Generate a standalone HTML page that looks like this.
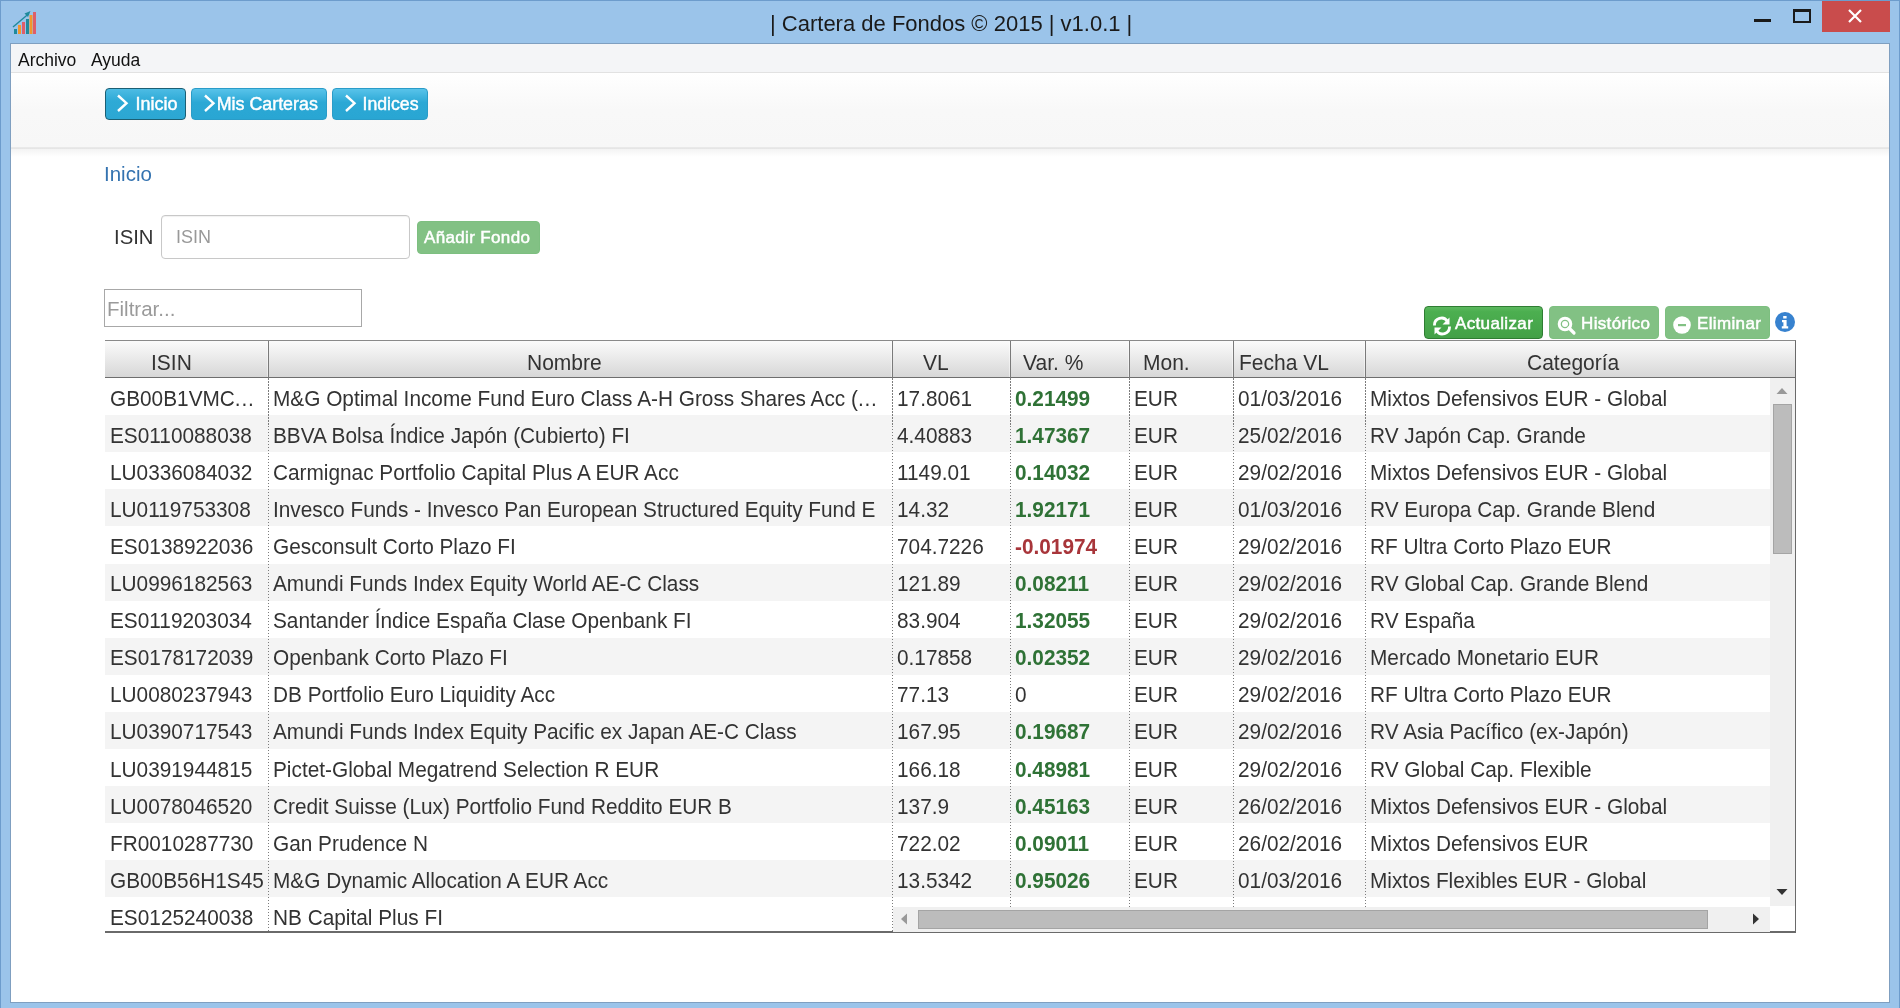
<!DOCTYPE html>
<html><head><meta charset="utf-8">
<style>
*{margin:0;padding:0;box-sizing:border-box}
html,body{width:1900px;height:1008px;overflow:hidden}
body{-webkit-font-smoothing:antialiased}
#wrap{position:absolute;left:0;top:0;width:1900px;height:1008px;will-change:transform}
body{position:relative;background:#9bc4ea;font-family:"Liberation Sans",sans-serif;color:#333}
.abs{position:absolute}
#frame{position:absolute;left:0;top:0;width:1900px;height:1008px;border:1px solid #6d9ccc;border-bottom:none}
#title{position:absolute;left:770px;top:11px;font-size:22px;color:#1a1a1a;white-space:nowrap;letter-spacing:0}
#client{position:absolute;left:10px;top:43px;width:1880px;height:960px;background:#fff;border:1px solid #7f9fc0}
#menu{position:absolute;left:0;top:0;width:1878px;height:29px;background:#f4f5f7;border-bottom:1px solid #e2e2e2}
#menu span{position:absolute;top:6px;font-size:17.5px;color:#111}
#toolbar{position:absolute;left:0;top:29px;width:1878px;height:75px;background:linear-gradient(#fff,#f8f8f8 50%,#f7f7f7)}
#tbline{position:absolute;left:0;top:103px;width:1878px;height:2px;background:linear-gradient(#ebebeb,#e4e4e4)}
#tbshadow{position:absolute;left:0;top:105px;width:1878px;height:8px;background:linear-gradient(#f3f3f3,#fff)}
.nav{position:absolute;top:88px;height:32px;border-radius:4px;color:#fff;font-size:18px;background:linear-gradient(#58c3ea,#2ba8d5 45%,#29a6d3);border:1px solid #2a9cc8}
.nav.sel{background:linear-gradient(#4dbce4,#2eaad6 40%,#2ca7d3);border:1.5px solid #1b5f74}
.nav span{position:absolute;top:5px;white-space:nowrap;-webkit-text-stroke:0.45px #fff}
.nav svg{position:absolute}
.gbtn{position:absolute;top:306px;height:33px;border-radius:4px;color:#fff;font-size:17px;letter-spacing:0.35px;background:#82c184;white-space:nowrap;border:1px solid #7dbf80}
.gbtn span{position:absolute;top:7px;-webkit-text-stroke:0.5px #fff}
.gbtn svg{position:absolute}
.cell{position:absolute;font-size:22px;white-space:nowrap;color:#333;transform:scaleX(0.9455);transform-origin:0 0}
.hdr{position:absolute;font-size:22px;white-space:nowrap;color:#333;top:349.8px;transform:scaleX(0.955);transform-origin:0 0}
.vsep{position:absolute;top:378px;width:1px;background:repeating-linear-gradient(#7c7c7c 0 1.5px,transparent 1.5px 3px)}
</style></head><body><div id="wrap">
<div id="frame"></div>
<!-- app icon -->
<svg class="abs" style="left:12px;top:9px" width="28" height="27" viewBox="0 0 28 27">
  <rect x="2" y="20" width="3" height="5" fill="#1f8a9c"/>
  <rect x="6" y="16" width="3" height="9" fill="#f2962c"/>
  <rect x="10" y="13" width="3" height="12" fill="#de5e6a"/>
  <rect x="14" y="10" width="3" height="15" fill="#1f8a9c"/>
  <rect x="17.5" y="6" width="3" height="19" fill="#f2962c"/>
  <rect x="21" y="3" width="3" height="22" fill="#de5e6a"/>
  <path d="M1 18 L17 4.5" stroke="#1f8a9c" stroke-width="1.4"/>
  <path d="M12.5 4.5 L18.5 2 L16 8 Z" fill="#1f8a9c"/>
</svg>
<div id="title">| Cartera de Fondos © 2015 | v1.0.1 |</div>
<!-- window controls -->
<div class="abs" style="left:1754px;top:19px;width:17px;height:3px;background:#1a1a1a"></div>
<div class="abs" style="left:1793px;top:9px;width:18px;height:14px;border:2px solid #1a1a1a;border-top-width:3px"></div>
<div class="abs" style="left:1822px;top:1px;width:68px;height:31px;background:#c94c4c"></div>
<svg class="abs" style="left:1846px;top:9px" width="18" height="14" viewBox="0 0 18 14"><path d="M3 1 L15 13 M15 1 L3 13" stroke="#fff" stroke-width="2.2"/></svg>

<div id="client">
  <div id="menu"><span style="left:7px">Archivo</span><span style="left:80px">Ayuda</span></div>
  <div id="toolbar"></div><div id="tbline"></div><div id="tbshadow"></div>
</div>

<div class="nav sel" style="left:104.5px;width:81px"><svg style="left:10.5px;top:4.5px" width="14" height="19"><path d="M2 1.5 L10.5 9.2 L2 17" fill="none" stroke="#fff" stroke-width="2.4"/></svg><span style="left:30px">Inicio</span></div>
<div class="nav" style="left:191px;width:136px"><svg style="left:10.6px;top:4.5px" width="14" height="19"><path d="M2 1.5 L10.5 9.2 L2 17" fill="none" stroke="#fff" stroke-width="2.4"/></svg><span style="left:24.7px;font-size:17.85px">Mis Carteras</span></div>
<div class="nav" style="left:331.5px;width:96px"><svg style="left:11.5px;top:4.5px" width="14" height="19"><path d="M2 1.5 L10.5 9.2 L2 17" fill="none" stroke="#fff" stroke-width="2.4"/></svg><span style="left:30px;font-size:17.7px">Indices</span></div>

<div class="abs" style="left:104px;top:162px;font-size:20.5px;color:#3473b0">Inicio</div>
<div class="abs" style="left:114px;top:225.5px;font-size:20.3px;color:#333">ISIN</div>
<div class="abs" style="left:161px;top:215px;width:249px;height:44px;border:1px solid #c8c8c8;border-radius:4px;box-shadow:inset 0 1px 1px rgba(0,0,0,0.06)"></div>
<div class="abs" style="left:176px;top:227px;font-size:18px;color:#999">ISIN</div>
<div class="gbtn" style="left:417px;top:221px;width:123px;height:33px"><span style="left:6px;top:6px">Añadir Fondo</span></div>

<div class="abs" style="left:104px;top:289px;width:258px;height:38px;border:1px solid #a8a8a8"></div>
<div class="abs" style="left:107px;top:297px;font-size:20.5px;color:#9a9a9a">Filtrar...</div>

<div class="gbtn" style="left:1424px;width:119px;background:linear-gradient(#5cb85f,#4caf50 15%,#43a047);border:1.5px solid #2f7d33">
  <svg style="left:7px;top:9px" width="20" height="20" viewBox="0 0 20 20"><g fill="none" stroke="#fff" stroke-width="2.8"><path d="M2.5 9.5 A7 7 0 0 1 15.5 5.5"/><path d="M17.5 10.5 A7 7 0 0 1 4.5 14.5"/></g><path d="M17.5 1.5 L17.5 8.5 L10.5 8.5 Z" fill="#fff"/><path d="M2.5 18.5 L2.5 11.5 L9.5 11.5 Z" fill="#fff"/></svg>
  <span style="left:30px">Actualizar</span></div>
<div class="gbtn" style="left:1549px;width:110px">
  <svg style="left:5px;top:7px" width="22" height="22" viewBox="0 0 22 22"><circle cx="10" cy="10" r="5.8" fill="none" stroke="#fff" stroke-width="3"/><circle cx="10" cy="10" r="3" fill="#fff"/><path d="M14 14 L19 19" stroke="#fff" stroke-width="3.2" stroke-linecap="round"/></svg>
  <span style="left:31px">Histórico</span></div>
<div class="gbtn" style="left:1665px;width:105px">
  <svg style="left:6px;top:8px" width="20" height="20" viewBox="0 0 20 20"><circle cx="10" cy="10" r="8.8" fill="#fff"/><rect x="6" y="9" width="8" height="2.2" fill="#82c184"/></svg>
  <span style="left:31px">Eliminar</span></div>
<svg class="abs" style="left:1774px;top:311px" width="22" height="22" viewBox="0 0 22 22"><circle cx="11" cy="11" r="10" fill="#3782cf"/><path d="M9.2 5 h3.4 v2.6 h-3.4 z M8 9 h4.6 v6.2 h1.6 v2.2 h-6.4 v-2.2 h1.6 v-4 h-1.4 z" fill="#fff"/></svg>

<!-- table -->
<div class="abs" style="left:105px;top:340px;width:1691px;height:593px;border-top:1px solid #8a8a8a;border-right:1px solid #6a6a6a;border-bottom:2px solid #6a6a6a"></div>
<div class="abs" style="left:105px;top:341px;width:1690px;height:37px;background:linear-gradient(#fbfbfb,#d7d7d7);border-bottom:1px solid #6e6e6e"></div>
<div class="abs" style="left:105px;top:415.10px;width:1665px;height:37.10px;background:#f4f4f4"></div>
<div class="abs" style="left:105px;top:489.30px;width:1665px;height:37.10px;background:#f4f4f4"></div>
<div class="abs" style="left:105px;top:563.50px;width:1665px;height:37.10px;background:#f4f4f4"></div>
<div class="abs" style="left:105px;top:637.70px;width:1665px;height:37.10px;background:#f4f4f4"></div>
<div class="abs" style="left:105px;top:711.90px;width:1665px;height:37.10px;background:#f4f4f4"></div>
<div class="abs" style="left:105px;top:786.10px;width:1665px;height:37.10px;background:#f4f4f4"></div>
<div class="abs" style="left:105px;top:860.30px;width:1665px;height:37.10px;background:#f4f4f4"></div>
<div class="cell" style="left:110px;top:385.50px">GB00B1VMC<span style="letter-spacing:0.85px">...</span></div>
<div class="cell" style="left:273px;top:385.50px">M&amp;G Optimal Income Fund Euro Class A-H Gross Shares Acc (<span style="letter-spacing:0.85px">...</span></div>
<div class="cell" style="left:897px;top:385.50px">17.8061</div>
<div class="cell" style="left:1015px;top:385.50px;color:#2f7236;font-weight:bold">0.21499</div>
<div class="cell" style="left:1134px;top:385.50px">EUR</div>
<div class="cell" style="left:1238px;top:385.50px">01/03/2016</div>
<div class="cell" style="left:1370px;top:385.50px">Mixtos Defensivos EUR - Global</div>
<div class="cell" style="left:110px;top:422.60px">ES0110088038</div>
<div class="cell" style="left:273px;top:422.60px">BBVA Bolsa Índice Japón (Cubierto) FI</div>
<div class="cell" style="left:897px;top:422.60px">4.40883</div>
<div class="cell" style="left:1015px;top:422.60px;color:#2f7236;font-weight:bold">1.47367</div>
<div class="cell" style="left:1134px;top:422.60px">EUR</div>
<div class="cell" style="left:1238px;top:422.60px">25/02/2016</div>
<div class="cell" style="left:1370px;top:422.60px">RV Japón Cap. Grande</div>
<div class="cell" style="left:110px;top:459.70px">LU0336084032</div>
<div class="cell" style="left:273px;top:459.70px">Carmignac Portfolio Capital Plus A EUR Acc</div>
<div class="cell" style="left:897px;top:459.70px">1149.01</div>
<div class="cell" style="left:1015px;top:459.70px;color:#2f7236;font-weight:bold">0.14032</div>
<div class="cell" style="left:1134px;top:459.70px">EUR</div>
<div class="cell" style="left:1238px;top:459.70px">29/02/2016</div>
<div class="cell" style="left:1370px;top:459.70px">Mixtos Defensivos EUR - Global</div>
<div class="cell" style="left:110px;top:496.80px">LU0119753308</div>
<div class="cell" style="left:273px;top:496.80px">Invesco Funds - Invesco Pan European Structured Equity Fund E</div>
<div class="cell" style="left:897px;top:496.80px">14.32</div>
<div class="cell" style="left:1015px;top:496.80px;color:#2f7236;font-weight:bold">1.92171</div>
<div class="cell" style="left:1134px;top:496.80px">EUR</div>
<div class="cell" style="left:1238px;top:496.80px">01/03/2016</div>
<div class="cell" style="left:1370px;top:496.80px">RV Europa Cap. Grande Blend</div>
<div class="cell" style="left:110px;top:533.90px">ES0138922036</div>
<div class="cell" style="left:273px;top:533.90px">Gesconsult Corto Plazo FI</div>
<div class="cell" style="left:897px;top:533.90px">704.7226</div>
<div class="cell" style="left:1015px;top:533.90px;color:#a8353a;font-weight:bold">-0.01974</div>
<div class="cell" style="left:1134px;top:533.90px">EUR</div>
<div class="cell" style="left:1238px;top:533.90px">29/02/2016</div>
<div class="cell" style="left:1370px;top:533.90px">RF Ultra Corto Plazo EUR</div>
<div class="cell" style="left:110px;top:571.00px">LU0996182563</div>
<div class="cell" style="left:273px;top:571.00px">Amundi Funds Index Equity World AE-C Class</div>
<div class="cell" style="left:897px;top:571.00px">121.89</div>
<div class="cell" style="left:1015px;top:571.00px;color:#2f7236;font-weight:bold">0.08211</div>
<div class="cell" style="left:1134px;top:571.00px">EUR</div>
<div class="cell" style="left:1238px;top:571.00px">29/02/2016</div>
<div class="cell" style="left:1370px;top:571.00px">RV Global Cap. Grande Blend</div>
<div class="cell" style="left:110px;top:608.10px">ES0119203034</div>
<div class="cell" style="left:273px;top:608.10px">Santander Índice España Clase Openbank FI</div>
<div class="cell" style="left:897px;top:608.10px">83.904</div>
<div class="cell" style="left:1015px;top:608.10px;color:#2f7236;font-weight:bold">1.32055</div>
<div class="cell" style="left:1134px;top:608.10px">EUR</div>
<div class="cell" style="left:1238px;top:608.10px">29/02/2016</div>
<div class="cell" style="left:1370px;top:608.10px">RV España</div>
<div class="cell" style="left:110px;top:645.20px">ES0178172039</div>
<div class="cell" style="left:273px;top:645.20px">Openbank Corto Plazo FI</div>
<div class="cell" style="left:897px;top:645.20px">0.17858</div>
<div class="cell" style="left:1015px;top:645.20px;color:#2f7236;font-weight:bold">0.02352</div>
<div class="cell" style="left:1134px;top:645.20px">EUR</div>
<div class="cell" style="left:1238px;top:645.20px">29/02/2016</div>
<div class="cell" style="left:1370px;top:645.20px">Mercado Monetario EUR</div>
<div class="cell" style="left:110px;top:682.30px">LU0080237943</div>
<div class="cell" style="left:273px;top:682.30px">DB Portfolio Euro Liquidity Acc</div>
<div class="cell" style="left:897px;top:682.30px">77.13</div>
<div class="cell" style="left:1015px;top:682.30px">0</div>
<div class="cell" style="left:1134px;top:682.30px">EUR</div>
<div class="cell" style="left:1238px;top:682.30px">29/02/2016</div>
<div class="cell" style="left:1370px;top:682.30px">RF Ultra Corto Plazo EUR</div>
<div class="cell" style="left:110px;top:719.40px">LU0390717543</div>
<div class="cell" style="left:273px;top:719.40px">Amundi Funds Index Equity Pacific ex Japan AE-C Class</div>
<div class="cell" style="left:897px;top:719.40px">167.95</div>
<div class="cell" style="left:1015px;top:719.40px;color:#2f7236;font-weight:bold">0.19687</div>
<div class="cell" style="left:1134px;top:719.40px">EUR</div>
<div class="cell" style="left:1238px;top:719.40px">29/02/2016</div>
<div class="cell" style="left:1370px;top:719.40px">RV Asia Pacífico (ex-Japón)</div>
<div class="cell" style="left:110px;top:756.50px">LU0391944815</div>
<div class="cell" style="left:273px;top:756.50px">Pictet-Global Megatrend Selection R EUR</div>
<div class="cell" style="left:897px;top:756.50px">166.18</div>
<div class="cell" style="left:1015px;top:756.50px;color:#2f7236;font-weight:bold">0.48981</div>
<div class="cell" style="left:1134px;top:756.50px">EUR</div>
<div class="cell" style="left:1238px;top:756.50px">29/02/2016</div>
<div class="cell" style="left:1370px;top:756.50px">RV Global Cap. Flexible</div>
<div class="cell" style="left:110px;top:793.60px">LU0078046520</div>
<div class="cell" style="left:273px;top:793.60px">Credit Suisse (Lux) Portfolio Fund Reddito EUR B</div>
<div class="cell" style="left:897px;top:793.60px">137.9</div>
<div class="cell" style="left:1015px;top:793.60px;color:#2f7236;font-weight:bold">0.45163</div>
<div class="cell" style="left:1134px;top:793.60px">EUR</div>
<div class="cell" style="left:1238px;top:793.60px">26/02/2016</div>
<div class="cell" style="left:1370px;top:793.60px">Mixtos Defensivos EUR - Global</div>
<div class="cell" style="left:110px;top:830.70px">FR0010287730</div>
<div class="cell" style="left:273px;top:830.70px">Gan Prudence N</div>
<div class="cell" style="left:897px;top:830.70px">722.02</div>
<div class="cell" style="left:1015px;top:830.70px;color:#2f7236;font-weight:bold">0.09011</div>
<div class="cell" style="left:1134px;top:830.70px">EUR</div>
<div class="cell" style="left:1238px;top:830.70px">26/02/2016</div>
<div class="cell" style="left:1370px;top:830.70px">Mixtos Defensivos EUR</div>
<div class="cell" style="left:110px;top:867.80px">GB00B56H1S45</div>
<div class="cell" style="left:273px;top:867.80px">M&amp;G Dynamic Allocation A EUR Acc</div>
<div class="cell" style="left:897px;top:867.80px">13.5342</div>
<div class="cell" style="left:1015px;top:867.80px;color:#2f7236;font-weight:bold">0.95026</div>
<div class="cell" style="left:1134px;top:867.80px">EUR</div>
<div class="cell" style="left:1238px;top:867.80px">01/03/2016</div>
<div class="cell" style="left:1370px;top:867.80px">Mixtos Flexibles EUR - Global</div>
<div class="cell" style="left:110px;top:904.90px">ES0125240038</div>
<div class="cell" style="left:273px;top:904.90px">NB Capital Plus FI</div>
<div class="hdr" style="left:151px">ISIN</div>
<div class="hdr" style="left:527px">Nombre</div>
<div class="hdr" style="left:923px">VL</div>
<div class="hdr" style="left:1023px">Var. %</div>
<div class="hdr" style="left:1143px">Mon.</div>
<div class="hdr" style="left:1239px">Fecha VL</div>
<div class="hdr" style="left:1527px">Categoría</div>
<div class="abs" style="left:268px;top:341px;width:1px;height:37px;background:#7a7a7a"></div>
<div class="abs" style="left:267px;top:342px;width:1px;height:35px;background:rgba(255,255,255,0.45)"></div>
<div class="abs" style="left:892px;top:341px;width:1px;height:37px;background:#7a7a7a"></div>
<div class="abs" style="left:891px;top:342px;width:1px;height:35px;background:rgba(255,255,255,0.45)"></div>
<div class="abs" style="left:1010px;top:341px;width:1px;height:37px;background:#7a7a7a"></div>
<div class="abs" style="left:1009px;top:342px;width:1px;height:35px;background:rgba(255,255,255,0.45)"></div>
<div class="abs" style="left:1129px;top:341px;width:1px;height:37px;background:#7a7a7a"></div>
<div class="abs" style="left:1128px;top:342px;width:1px;height:35px;background:rgba(255,255,255,0.45)"></div>
<div class="abs" style="left:1233px;top:341px;width:1px;height:37px;background:#7a7a7a"></div>
<div class="abs" style="left:1232px;top:342px;width:1px;height:35px;background:rgba(255,255,255,0.45)"></div>
<div class="abs" style="left:1365px;top:341px;width:1px;height:37px;background:#7a7a7a"></div>
<div class="abs" style="left:1364px;top:342px;width:1px;height:35px;background:rgba(255,255,255,0.45)"></div>
<div class="vsep" style="left:268px;height:554px"></div>
<div class="vsep" style="left:892px;height:554px"></div>
<div class="vsep" style="left:1010px;height:529px"></div>
<div class="vsep" style="left:1129px;height:529px"></div>
<div class="vsep" style="left:1233px;height:529px"></div>
<div class="vsep" style="left:1365px;height:529px"></div>
<div class="abs" style="left:893px;top:907px;width:877px;height:25px;background:#f0f0f0"></div>
<div class="abs" style="left:918px;top:910px;width:790px;height:19px;background:#bcbcbc;border:1px solid #a4a4a4"></div>
<svg class="abs" style="left:899px;top:912px" width="10" height="14"><path d="M2 7 L8 1.5 L8 12.5 Z" fill="#999"/></svg>
<svg class="abs" style="left:1751px;top:912px" width="10" height="14"><path d="M8 7 L2 1.5 L2 12.5 Z" fill="#333"/></svg>
<div class="abs" style="left:1770px;top:378px;width:25px;height:528px;background:#f0f0f0"></div>
<div class="abs" style="left:1773px;top:404px;width:19px;height:150px;background:#bcbcbc;border:1px solid #a4a4a4"></div>
<svg class="abs" style="left:1775px;top:386px" width="14" height="10"><path d="M7 2 L1.5 8 L12.5 8 Z" fill="#999"/></svg>
<svg class="abs" style="left:1775px;top:887px" width="14" height="10"><path d="M7 8 L1.5 2 L12.5 2 Z" fill="#333"/></svg>

</div></body></html>
